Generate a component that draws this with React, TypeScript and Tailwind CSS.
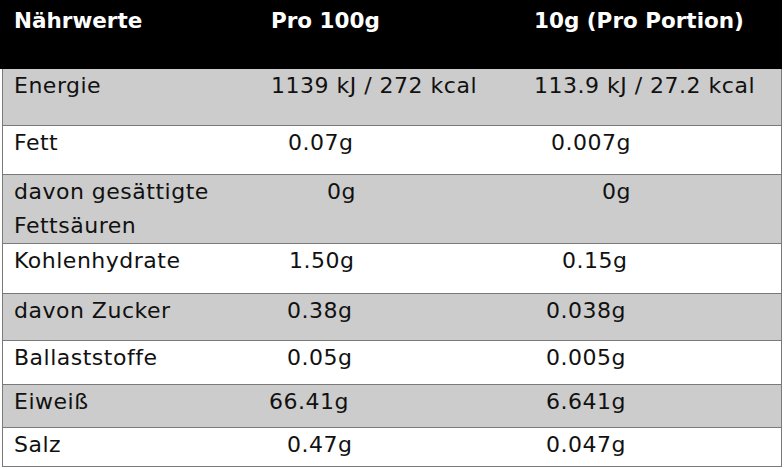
import React from "react";

type Row = {
  label: React.ReactNode;
  v1: string;
  o1: number;
  v2: string;
  o2: number;
  h: number;
  gray: boolean;
};

const rows: Row[] = [
  { label: "Energie", v1: "1139 kJ / 272 kcal", o1: 2, v2: "113.9 kJ / 27.2 kcal", o2: 0, h: 56, gray: true },
  { label: "Fett", v1: "0.07g", o1: 19, v2: "0.007g", o2: 17, h: 49, gray: false },
  { label: "davon gesättigte Fettsäuren", v1: "0g", o1: 58, v2: "0g", o2: 68, h: 69, gray: true },
  { label: "Kohlenhydrate", v1: "1.50g", o1: 20, v2: "0.15g", o2: 28, h: 50, gray: false },
  { label: "davon Zucker", v1: "0.38g", o1: 18, v2: "0.038g", o2: 12, h: 47, gray: true },
  { label: "Ballaststoffe", v1: "0.05g", o1: 18, v2: "0.005g", o2: 12, h: 44, gray: false },
  { label: "Eiweiß", v1: "66.41g", o1: 0, v2: "6.641g", o2: 12, h: 43, gray: true },
  { label: "Salz", v1: "0.47g", o1: 18, v2: "0.047g", o2: 12, h: 39, gray: false },
];

export default function App() {
  return (
    <div
      className="w-[784px] h-[469px] bg-white overflow-hidden"
      style={{ fontFamily: '"DejaVu Sans", "Open Sans", sans-serif' }}
    >
      <div className="w-[782px]">
        <div className="grid grid-cols-[269px_265px_1fr] h-[69px] bg-black text-white font-bold text-[21.5px] leading-[28px] pt-[7px]">
          <div className="pl-[14px]">Nährwerte</div>
          <div className="pl-[2px]">Pro 100g</div>
          <div>10g (Pro Portion)</div>
        </div>
        <div className="ml-[2px] w-[780px] border-l border-r border-b border-[#7a7a7a]">
          {rows.map((r, i) => (
            <div
              key={i}
              className={`grid grid-cols-[266px_265px_1fr] text-[22px] leading-[34px] tracking-[0.5px] text-[#111111] ${
                i > 0 ? "border-t border-[#7a7a7a]" : ""
              } ${r.gray ? "bg-[#cccccc]" : "bg-white"}`}
              style={{ height: r.h }}
            >
              <div className="pl-[11px] pr-[30px]">{r.label}</div>
              <div style={{ paddingLeft: r.o1 }}>{r.v1}</div>
              <div style={{ paddingLeft: r.o2 }}>{r.v2}</div>
            </div>
          ))}
        </div>
      </div>
    </div>
  );
}
